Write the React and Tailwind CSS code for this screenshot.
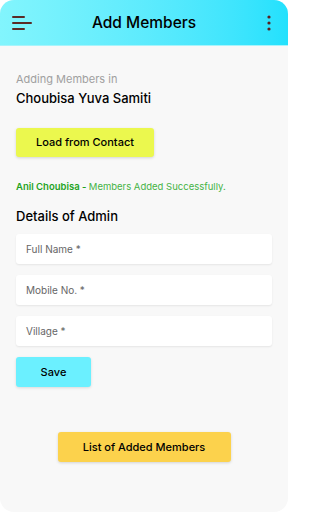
import React from 'react';

const fields = ['Full Name *', 'Mobile No. *', 'Village *'];

const App = () => {
  return (
    <div className="w-[288px] h-[512px] bg-white" style={{ fontFamily: 'Inter, "Noto Sans", sans-serif' }}>
      <div className="w-full h-full bg-[#f8f8f8] rounded-[14px] overflow-hidden flex flex-col">
        <div className="h-[46px] shrink-0 bg-gradient-to-r from-[#82f5fd] to-[#22e1fd] grid grid-cols-[48px_1fr_48px] items-center border-b border-[#a8f4fb]">
          <svg className="ml-3" width="22" height="16" viewBox="0 0 22 16">
            <rect x="0" y="1" width="13" height="2" rx="1" fill="#5a2a26" />
            <rect x="0" y="7" width="20" height="2" rx="1" fill="#5a2a26" />
            <rect x="0" y="13" width="13" height="2" rx="1" fill="#5a2a26" />
          </svg>
          <h1 className="text-center text-[15.5px] font-medium text-black">Add Members</h1>
          <svg className="justify-self-end mr-[17px]" width="4" height="16" viewBox="0 0 4 16">
            <circle cx="2" cy="2" r="1.6" fill="#5a2020" />
            <circle cx="2" cy="8" r="1.6" fill="#5a2020" />
            <circle cx="2" cy="14" r="1.6" fill="#5a2020" />
          </svg>
        </div>

        <div className="flex flex-col px-4 flex-1">
          <p className="mt-[25px] text-[11px] text-[#a0a0a0] leading-4">Adding Members in</p>
          <p className="mt-[3px] text-[13px] font-medium text-black leading-4">Choubisa Yuva Samiti</p>

          <button className="mt-[22px] w-[138px] h-[29px] bg-[#ebf84e] rounded-[3px] shadow-[0_1px_3px_rgba(0,0,0,0.15)] text-[11px] font-medium text-black">
            Load from Contact
          </button>

          <p className="mt-[24px] text-[9.5px] leading-3 text-[#45b345]">
            <span className="font-semibold text-[#1fa31f]">Anil Choubisa - </span> Members Added Successfully.
          </p>

          <h2 className="mt-[15px] text-[13px] font-medium text-black leading-4">Details of Admin</h2>

          <div className="mt-[10px] flex flex-col gap-[11px]">
            {fields.map((f) => (
              <div key={f} className="h-[30px] bg-white rounded-[3px] shadow-[0_1px_2px_rgba(0,0,0,0.08)] flex items-center px-[10px] text-[10px] text-[#666]">
                {f}
              </div>
            ))}
          </div>

          <button className="mt-[11px] w-[75px] h-[30px] bg-[#6bf0ff] rounded-[3px] shadow-[0_1px_3px_rgba(0,0,0,0.12)] text-[11px] font-medium text-black">
            Save
          </button>

          <div className="mt-[45px] flex justify-center">
            <button className="w-[173px] h-[30px] bg-[#fcd24c] rounded-[3px] shadow-[0_1px_3px_rgba(0,0,0,0.15)] text-[11px] font-medium text-black">
              List of Added Members
            </button>
          </div>
        </div>
      </div>
    </div>
  );
};

export default App;
